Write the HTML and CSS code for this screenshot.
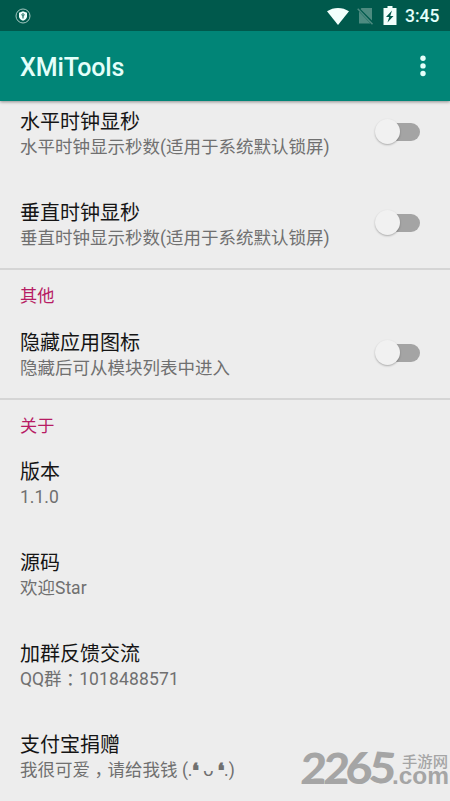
FILE: index.html
```html
<!DOCTYPE html>
<html lang="zh-CN">
<head>
<meta charset="utf-8">
<title>XMiTools</title>
<link rel="stylesheet" href="styles.css">
</head>
<body>
<header class="top">
  <div class="status">
    <svg class="shield" width="16" height="16" viewBox="0 0 16 16"><circle cx="8" cy="8" r="7" fill="none" stroke="#b5d3cc" stroke-width=".9"/><path d="M8 3.300 12 4.700v3.500c0 2-1.500 3.500-4 4.600-2.500-1.100-4-2.600-4-4.600V4.700Z" fill="#f2fffc"/><circle cx="8" cy="6.800" r="1.100" fill="none" stroke="#00594c" stroke-width=".9"/><path d="M8 8v2.500" stroke="#00594c" stroke-width="1"/></svg>
    <svg class="icons" width="72" height="20" viewBox="0 0 72 20"><path d="M1 5.300C7.500.8 16.500.8 23 5.300L12 19Z" fill="#f2fffc"/><path d="M35.500 2H46v12.500L34.500 3ZM33 5.500 44.500 17.500H33Z" fill="#4d8b80"/><path d="m31.700 2.700 14.800 15.500" stroke="#4d8b80" stroke-width="1.500"/><path d="M61.500 0h5v2H70.500v17h-13V2h4Z" fill="#f2fffc"/><path d="m66 4.500-6 6.500h3.200L61.500 16.500l6-6.500h-3.200Z" fill="#00594c"/></svg>
    <span class="time">3:45</span>
  </div>
  <div class="bar">
    <h1>XMiTools</h1>
    <svg width="6" height="22" viewBox="0 0 6 22" fill="#e4fffa"><circle cx="3" cy="3.300" r="2.700"/><circle cx="3" cy="10.900" r="2.700"/><circle cx="3" cy="18.500" r="2.700"/></svg>
  </div>
</header>
<main>
  <section>
    <div class="row"><div><h2>水平时钟显秒</h2><p>水平时钟显示秒数(适用于系统默认锁屏)</p></div><span class="switch"></span></div>
    <div class="row"><div><h2>垂直时钟显秒</h2><p>垂直时钟显示秒数(适用于系统默认锁屏)</p></div><span class="switch"></span></div>
  </section>
  <section>
    <h3>其他</h3>
    <div class="row"><div><h2>隐藏应用图标</h2><p>隐藏后可从模块列表中进入</p></div><span class="switch"></span></div>
  </section>
  <section class="about">
    <h3>关于</h3>
    <div class="row"><div><h2>版本</h2><p>1.1.0</p></div></div>
    <div class="row"><div><h2>源码</h2><p>欢迎Star</p></div></div>
    <div class="row"><div><h2>加群反馈交流</h2><p>QQ群<span class="punct">：</span><span class="num">1018488571</span></p></div></div>
    <div class="row"><div><h2>支付宝捐赠</h2><p>我很可爱<span class="punct">，</span>请给我钱 <span class="face">(.<b>❛</b> ᴗ <b>❛</b>.)</span></p></div></div>
  </section>
</main>
<svg class="mark" width="152" height="54" viewBox="0 -8 152 54" fill="#a5a5a5">
  <g class="digits">
    <text transform="translate(1 38.500) skewX(-3)" textLength="26" lengthAdjust="spacingAndGlyphs">2</text>
    <text transform="translate(24 38.500) skewX(-3)" textLength="26" lengthAdjust="spacingAndGlyphs">2</text>
    <text transform="translate(46.500 38.500)" textLength="27" lengthAdjust="spacingAndGlyphs">6</text>
    <text transform="translate(69 37) rotate(5)" textLength="27" lengthAdjust="spacingAndGlyphs">5</text>
  </g>
  <text class="site" x="103" y="21.500" textLength="46" lengthAdjust="spacingAndGlyphs">手游网</text>
  <text class="com" x="93" y="38.500" textLength="57" lengthAdjust="spacingAndGlyphs">.com</text>
</svg>
</body>
</html>
```
FILE: styles.css
```css
* { box-sizing: border-box; }
body {
  margin: 0;
  position: relative;
  height: 801px;
  overflow: hidden;
  display: flex;
  flex-direction: column;
  background: #ededed;
  font-family: Roboto, "Noto Sans CJK SC", sans-serif;
}
h1, h2, h3, p { margin: 0; }
.top {
  position: relative;
  z-index: 1;
  flex: none;
  height: 101px;
  background: #018577;
  box-shadow: 0 1px 3px rgba(0, 0, 0, .4);
}
.status {
  height: 31px;
  background: #00594c;
  display: flex;
  align-items: center;
  padding: 0 10px 0 15px;
}
.icons { margin-left: auto; }
.time {
  width: 35px;
  margin-left: 7px;
  color: #e4fffa;
  font-size: 17.5px;
  font-weight: 500;
  line-height: 31px;
  padding-top: 2px;
}
.bar {
  height: 70px;
  display: flex;
  align-items: center;
  justify-content: space-between;
  padding: 2px 24px 0 20px;
}
.bar svg { margin-bottom: 2px; }
h1 {
  color: #e4fffa;
  font-size: 25px;
  font-weight: 500;
  letter-spacing: -.1px;
}
main { flex: none; margin-top: -14px; }
section + section { border-top: 2px solid #d5d5d5; margin-top: -1px; }
h3 {
  height: 38px;
  padding: 13px 20px 0;
  color: #b71c64;
  font-size: 17.2px;
  font-weight: 400;
  line-height: 26px;
}
.about h3 { height: 37px; }
.row {
  height: 91px;
  display: flex;
  align-items: center;
  justify-content: space-between;
  padding: 0 30px 0 20px;
}
h2 {
  height: 26px;
  color: #151515;
  font-size: 20px;
  font-weight: 400;
  line-height: 29px;
}
p {
  height: 24px;
  color: #707070;
  font-size: 17.5px;
  line-height: 27px;
  white-space: nowrap;
}
.punct {
  padding: 0 4.4px;
  font-feature-settings: "halt";
}
.num { letter-spacing: .15px; }
.face { font-family: Roboto, "DejaVu Sans", sans-serif; }
.face b { -webkit-text-stroke: 1.6px #707070; }
.switch {
  width: 45px;
  height: 26px;
  display: flex;
  align-items: center;
  margin-bottom: 2px;
}
.switch::before {
  content: "";
  width: 25px;
  height: 25px;
  flex: none;
  border-radius: 50%;
  background: #f1f1f1;
  box-shadow: 0 1px 2px rgba(0, 0, 0, .28);
  z-index: 1;
}
.switch::after {
  content: "";
  width: 32px;
  height: 18px;
  flex: none;
  margin-left: -12px;
  border-radius: 9px;
  background: #a4a4a4;
}
.mark {
  position: absolute;
  left: 299px;
  top: 737px;
  overflow: visible;
}
.digits { font: 900 43px Lato, sans-serif; }
.site { font: 500 15px "Noto Sans CJK SC", sans-serif; }
.com { font: 700 24px "Liberation Sans", sans-serif; }
```
